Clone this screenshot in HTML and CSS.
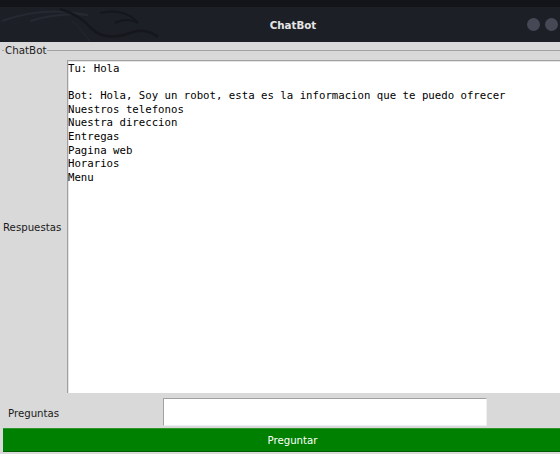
FILE: index.html
```html
<!DOCTYPE html>
<html lang="es">
<head>
<meta charset="utf-8">
<title>ChatBot</title>
<link rel="stylesheet" href="styles.css">
</head>
<body>
<div class="app">
  <div class="topstrip"></div>
  <header class="titlebar">
    <svg class="watermark" width="170" height="35" viewBox="0 0 170 35" aria-hidden="true">
      <path d="M2 14 C30 4 60 2 88 8 C70 6 50 8 30 14" fill="none" stroke="#262932" stroke-width="2"/>
      <path d="M60 2 C75 6 85 14 92 22 C100 30 115 32 130 26 C140 22 150 24 158 30" fill="none" stroke="#15171c" stroke-width="2.5"/>
      <path d="M100 6 C115 2 130 6 138 16 C132 12 122 12 115 16" fill="none" stroke="#15171c" stroke-width="2"/>
      <path d="M72 14 C80 20 84 28 90 34" fill="none" stroke="#22252d" stroke-width="1.5"/>
    </svg>
    <div class="spacer"></div>
    <h1 class="title">ChatBot</h1>
    <div class="controls">
      <span class="dot"></span>
      <span class="dot"></span>
    </div>
  </header>
  <main class="window">
    <fieldset class="group">
      <legend class="group-label">ChatBot</legend>
      <div class="answers">
        <div class="answers-label">Respuestas</div>
        <div class="answers-text">Tu: Hola

Bot: Hola, Soy un robot, esta es la informacion que te puedo ofrecer
Nuestros telefonos
Nuestra direccion
Entregas
Pagina web
Horarios
Menu</div>
      </div>
    </fieldset>
    <div class="ask">
      <label class="ask-label" for="q">Preguntas</label>
      <input class="ask-input" id="q" type="text">
    </div>
    <button class="ask-button" type="button">Preguntar</button>
  </main>
</div>
</body>
</html>
```
FILE: styles.css
```css
* { box-sizing: border-box; }
html, body {
  margin: 0;
  padding: 0;
  width: 560px;
  height: 454px;
  overflow: hidden;
  background: #d9d9d9;
}
.app {
  display: flex;
  flex-direction: column;
  width: 560px;
  height: 454px;
  font-family: "DejaVu Sans", sans-serif;
}
.topstrip {
  height: 7px;
  background: #121419;
}
.titlebar {
  position: relative;
  height: 35px;
  background: #1c1f26;
  display: grid;
  grid-template-columns: 1fr auto 1fr;
  align-items: center;
}
.watermark {
  position: absolute;
  left: 0;
  top: 0;
}
.title {
  margin: 0;
  font-size: 10.3px;
  font-weight: bold;
  color: #e6e6e6;
  padding-left: 26px;
  position: relative;
}
.controls {
  display: flex;
  justify-content: flex-end;
  gap: 5px;
  padding-right: 2px;
}
.dot {
  width: 13px;
  height: 13px;
  border-radius: 50%;
  background: #464856;
}
.window {
  flex: 1;
  display: flex;
  flex-direction: column;
  background: #d9d9d9;
  padding-top: 2px;
}
.group {
  margin: 0 0 0 2px;
  padding: 4px 0 2px 0;
  border: none;
  border-top: 1px solid #a2a2a2;
  min-width: 0;
}
.group-label {
  font-size: 10.3px;
  line-height: 12px;
  color: #222;
  padding: 0 1px;
  margin-left: 2px;
}
.answers {
  display: grid;
  grid-template-columns: 65px 1fr;
  height: 333px;
}
.answers-label {
  align-self: center;
  font-size: 10.2px;
  color: #1a1a1a;
  padding: 2px 0 0 1px;
}
.answers-text {
  background: #fff;
  border-top: 1px solid #a0a0a0;
  border-left: 1px solid #a0a0a0;
  box-shadow: inset 1px 1px 0 #e4e4e4;
  padding: 1px 0 0 0;
  font-family: "DejaVu Sans Mono", monospace;
  font-size: 10.7px;
  line-height: 13.6px;
  color: #000;
  white-space: pre;
  overflow: hidden;
}
.ask {
  display: flex;
  align-items: center;
  height: 33px;
  padding-left: 8px;
}
.ask-label {
  width: 155px;
  font-size: 10.2px;
  color: #1a1a1a;
  padding-top: 4px;
}
.ask-input {
  width: 324px;
  height: 28px;
  margin: 0;
  background: #fff;
  border: 1px solid #f0f0f0;
  border-top-color: #a0a0a0;
  border-left-color: #a0a0a0;
  outline: none;
}
.ask-button {
  margin: 0 0 0 3px;
  height: 24px;
  background: #008000;
  color: #fff;
  border: none;
  border-top: 1px solid #2e942e;
  border-bottom: 1px solid #005a00;
  font-family: "DejaVu Sans", sans-serif;
  font-size: 10.2px;
  padding: 0 0 0 22px;
}
```
